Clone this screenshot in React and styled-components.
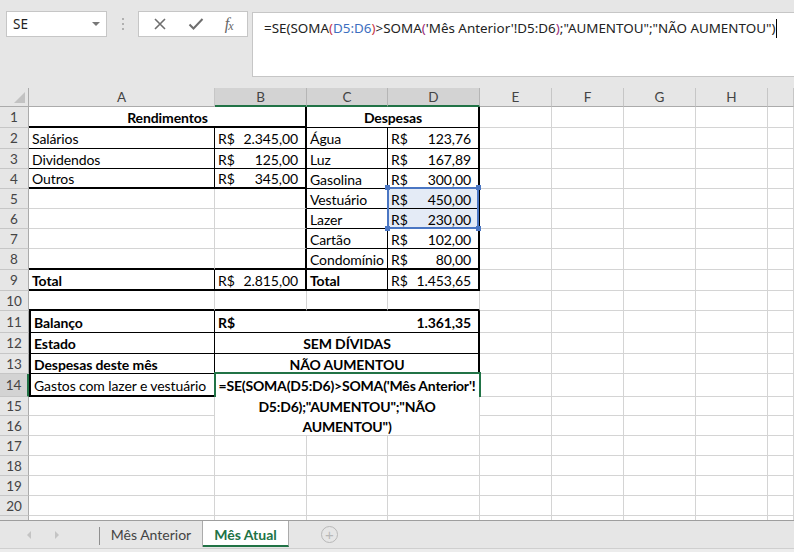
import React from "react";
import styled, { createGlobalStyle } from "styled-components";

const GlobalStyle = createGlobalStyle`
  * { box-sizing: border-box; }
  body {
    margin: 0;
    background: #ffffff;
    overflow: hidden;
    font-family: Lato, "Liberation Sans", sans-serif;
  }
`;

const COLS = [29, 186, 92, 81, 92, 72, 72, 72, 72, 26];
const LETTERS = ["A", "B", "C", "D", "E", "F", "G", "H", ""];
const ROW_H = [21, 21, 20, 20, 20, 20, 20, 21, 21, 20, 22, 21, 20, 23, 19, 20, 20, 20, 20, 20, 20];
const GREEN = "#217346";
const GRID = "#d4d4d4";

const line = (t) =>
  t === "thin" ? "1px solid #000" : t === "thick" ? "2px solid #000" : t === "none" ? "1px solid transparent" : `1px solid ${GRID}`;

const Window = styled.div`
  width: 794px;
  height: 552px;
  display: flex;
  flex-direction: column;
  background: #e6e6e6;
  overflow: hidden;
`;

const FormulaRow = styled.div`
  height: 88px;
  flex: none;
  display: flex;
  align-items: flex-start;
  padding: 11px 0 0 6px;
  background: #e6e6e6;
`;

const NameBox = styled.div`
  width: 101px;
  height: 26px;
  background: #fff;
  border: 1px solid #c6c6c6;
  display: flex;
  align-items: center;
  justify-content: space-between;
  padding: 0 6px 0 6px;
  font-family: "Noto Sans", sans-serif;
  font-size: 13.5px;
  color: #222;
`;

const Caret = styled.span`
  width: 0;
  height: 0;
  border-left: 4px solid transparent;
  border-right: 4px solid transparent;
  border-top: 4px solid #777;
`;

const Grip = styled.div`
  width: 31px;
  height: 26px;
  display: flex;
  flex-direction: column;
  align-items: center;
  justify-content: center;
  gap: 3px;
  span {
    width: 2px;
    height: 2px;
    background: #b0b0b0;
  }
`;

const FxGroup = styled.div`
  width: 110px;
  height: 26px;
  background: #fff;
  border: 1px solid #c6c6c6;
  display: flex;
  align-items: center;
  justify-content: space-around;
  padding: 0 4px;
`;

const Fx = styled.span`
  font-family: "Liberation Serif", serif;
  font-style: italic;
  font-size: 16px;
  color: #666;
  letter-spacing: -1px;
  sub {
    font-size: 12px;
    vertical-align: -1px;
  }
`;

const FormulaInput = styled.div`
  flex: 1;
  height: 65px;
  margin-left: 4px;
  margin-top: 1px;
  background: #fff;
  border: 1px solid #c6c6c6;
  border-right: none;
  padding: 6px 0 0 11px;
  font-family: "Noto Sans", sans-serif;
  font-size: 13.4px;
  color: #222;
  white-space: nowrap;
  display: flex;
  align-items: flex-start;
`;

const Tok = styled.span`
  color: ${(p) => p.$c || "#222"};
`;

const TextCursor = styled.span`
  display: inline-block;
  width: 1px;
  height: 19px;
  background: #000;
  margin-left: 1px;
`;

const Sheet = styled.div`
  height: 432px;
  flex: none;
  overflow: hidden;
  background: #fff;
  display: grid;
  grid-template-columns: ${COLS.map((c) => c + "px").join(" ")};
  grid-template-rows: 19px ${ROW_H.map((h) => h + "px").join(" ")};
`;

const Corner = styled.div`
  background: #e6e6e6;
  border-right: 1px solid #ababab;
  border-bottom: 1px solid #ababab;
  display: flex;
  align-items: flex-end;
  justify-content: flex-end;
  padding: 0 3px 3px 0;
  span {
    width: 0;
    height: 0;
    border-left: 11px solid transparent;
    border-bottom: 11px solid #c2c2c2;
  }
`;

const ColHead = styled.div`
  background: ${(p) => (p.$on ? "#d3d3d3" : "#e6e6e6")};
  border-right: 1px solid ${(p) => (p.$on ? "#b5b5b5" : "#c6c6c6")};
  border-bottom: ${(p) => (p.$on ? `2px solid ${GREEN}` : "1px solid #ababab")};
  display: flex;
  align-items: center;
  justify-content: center;
  font-size: 13.5px;
  color: #444;
  padding-top: ${(p) => (p.$on ? "1px" : "0")};
`;

const RowHead = styled.div`
  background: ${(p) => (p.$on ? "#d3d3d3" : "#e6e6e6")};
  border-right: ${(p) => (p.$on ? `2px solid ${GREEN}` : "1px solid #ababab")};
  border-bottom: 1px solid #c6c6c6;
  display: flex;
  align-items: center;
  justify-content: center;
  font-size: 13.5px;
  color: #444;
`;

const Cell = styled.div`
  position: relative;
  grid-column: span ${(p) => p.$span || 1};
  border-right: ${(p) => line(p.$r)};
  border-bottom: ${(p) => line(p.$b)};
  border-left: ${(p) => (p.$l ? line(p.$l) : "none")};
  background: ${(p) => (p.$sel ? "#e4ebf6" : "#fff")};
  display: flex;
  align-items: center;
  justify-content: ${(p) => (p.$center ? "center" : "flex-start")};
  padding: 1px 2px 0 3px;
  font-size: 14px;
  letter-spacing: -0.1px;
  font-weight: ${(p) => (p.$bold ? 700 : 400)};
  color: #000;
  white-space: nowrap;
  overflow: visible;
`;

const Money = styled(Cell)`
  justify-content: space-between;
  padding-right: 7px;
`;

const RefBox = styled.div`
  position: absolute;
  top: -2px;
  left: -1px;
  width: calc(100% + 2px);
  height: 42px;
  border: 2px solid #4a76c3;
  z-index: 2;
  pointer-events: none;
  i {
    position: absolute;
    width: 5px;
    height: 5px;
    background: #4a76c3;
  }
`;

const Editor = styled.div`
  position: relative;
  grid-column: span 3;
  grid-row: span 3;
  background: #fff;
  border-bottom: 1px solid ${GRID};
  border-right: 1px solid ${GRID};
  display: flex;
  flex-direction: column;
  align-items: center;
  padding-top: 2px;
  font-size: 14px;
  letter-spacing: -0.2px;
  font-weight: 700;
  line-height: 20.5px;
  white-space: nowrap;
  z-index: 1;
`;

const ActiveFrame = styled.div`
  position: absolute;
  top: -2px;
  left: -1px;
  right: -2px;
  height: 25px;
  border: 2px solid ${GREEN};
  border-bottom: none;
  pointer-events: none;
`;

const TabBar = styled.div`
  height: 32px;
  flex: none;
  display: flex;
  align-items: stretch;
  background: #e6e6e6;
  border-top: 1px solid #9e9e9e;
  box-shadow: inset 0 -4px 0 #ececec;
  position: relative;
  &::after {
    content: "";
    position: absolute;
    left: 0;
    right: 0;
    bottom: 3px;
    height: 1px;
    background: #cfcfcf;
  }
`;

const NavArrows = styled.div`
  width: 99px;
  display: flex;
  align-items: center;
  padding: 0 0 4px 27px;
  gap: 24px;
`;

const Arrow = styled.span`
  width: 0;
  height: 0;
  border-top: 4px solid transparent;
  border-bottom: 4px solid transparent;
  ${(p) => (p.$dir === "left" ? "border-right: 4px solid #c4c4c4;" : "border-left: 4px solid #c4c4c4;")}
`;

const Divider = styled.div`
  width: 1px;
  height: 18px;
  margin-top: 6px;
  background: #8f8f8f;
`;

const Tab = styled.div`
  display: flex;
  align-items: center;
  justify-content: center;
  width: ${(p) => p.$w}px;
  height: 26px;
  background: ${(p) => (p.$active ? "#fff" : "transparent")};
  border-right: 1px solid #ababab;
  border-bottom: ${(p) => (p.$active ? `2px solid ${GREEN}` : "none")};
  font-size: 14px;
  font-weight: ${(p) => (p.$active ? 700 : 400)};
  color: ${(p) => (p.$active ? GREEN : "#444")};
  padding-top: ${(p) => (p.$active ? "2px" : "0")};
`;

const AddSheet = styled.div`
  margin: 5px 0 0 32px;
  width: 17px;
  height: 17px;
  border-radius: 50%;
  border: 1px solid #b8b8b8;
  color: #b8b8b8;
  display: flex;
  align-items: center;
  justify-content: center;
  font-size: 15px;
  line-height: 1;
  font-family: "Liberation Sans", sans-serif;
`;

const CloseIcon = () => (
  <svg width="14" height="14" viewBox="0 0 14 14">
    <path d="M2 2 L12 12 M12 2 L2 12" stroke="#6e6e6e" strokeWidth="1.6" />
  </svg>
);

const CheckIcon = () => (
  <svg width="16" height="14" viewBox="0 0 16 14">
    <path d="M1.5 7.5 L5.5 11.5 L14.5 2" stroke="#6e6e6e" strokeWidth="2" fill="none" />
  </svg>
);

const money = (v, extra = {}) => ({ kind: "money", v, ...extra });
const txt = (v, extra = {}) => ({ kind: "text", v, ...extra });

// columns A..D per row; E..I are plain grid cells
const ROWS = [
  [txt("Rendimentos", { $span: 2, $bold: true, $center: true, $b: "thick", $r: "thick" }), txt("Despesas", { $span: 2, $bold: true, $center: true, $b: "thin", $r: "thick" })],
  [txt("Salários", { $r: "thin", $b: "thin" }), money("2.345,00", { $r: "thick", $b: "thin" }), txt("Água", { $r: "thin", $b: "thin" }), money("123,76", { $r: "thick", $b: "thin" })],
  [txt("Dividendos", { $r: "thin", $b: "thin" }), money("125,00", { $r: "thick", $b: "thin" }), txt("Luz", { $r: "thin", $b: "thin" }), money("167,89", { $r: "thick", $b: "thin" })],
  [txt("Outros", { $r: "thin", $b: "thick" }), money("345,00", { $r: "thick", $b: "thick" }), txt("Gasolina", { $r: "thin", $b: "thin" }), money("300,00", { $r: "thick", $b: "thin" })],
  [txt(""), txt("", { $r: "thick" }), txt("Vestuário", { $r: "thin", $b: "thin" }), money("450,00", { $r: "thick", $b: "thin", $sel: true, ref: true })],
  [txt(""), txt("", { $r: "thick" }), txt("Lazer", { $r: "thin", $b: "thin" }), money("230,00", { $r: "thick", $b: "thin", $sel: true })],
  [txt(""), txt("", { $r: "thick" }), txt("Cartão", { $r: "thin", $b: "thin" }), money("102,00", { $r: "thick", $b: "thin" })],
  [txt("", { $b: "thick" }), txt("", { $r: "thick", $b: "thick" }), txt("Condomínio", { $r: "thin", $b: "thick" }), money("80,00", { $r: "thick", $b: "thick" })],
  [txt("Total", { $bold: true, $r: "thin", $b: "thick" }), money("2.815,00", { $r: "thick", $b: "thick" }), txt("Total", { $bold: true, $r: "thin", $b: "thick" }), money("1.453,65", { $r: "thick", $b: "thick" })],
  [txt("", { $b: "thick" }), txt("", { $b: "thick" }), txt("", { $b: "thick" }), txt("", { $b: "thick" })],
  [txt("Balanço", { $bold: true, $l: "thick", $r: "thin", $b: "thin" }), money("1.361,35", { $span: 3, $bold: true, $r: "thick", $b: "thin" })],
  [txt("Estado", { $bold: true, $l: "thick", $r: "thin", $b: "thin" }), txt("SEM DÍVIDAS", { $span: 3, $bold: true, $center: true, $r: "thick", $b: "thin" })],
  [txt("Despesas deste mês", { $bold: true, $l: "thick", $r: "thin", $b: "thin" }), txt("NÃO AUMENTOU", { $span: 3, $bold: true, $center: true, $r: "thick", $b: "thin" })],
  [txt("Gastos com lazer e vestuário", { $l: "thick", $r: "none", $b: "thick" }), { kind: "editor" }],
  [txt("")],
  [txt("")],
];

const renderCell = (c, key) => {
  if (c.kind === "editor") {
    return (
      <Editor key={key}>
        <ActiveFrame />
        <span>=SE(SOMA(D5:D6)&gt;SOMA('Mês Anterior'!</span>
        <span>D5:D6);"AUMENTOU";"NÃO</span>
        <span>AUMENTOU")</span>
      </Editor>
    );
  }
  const { kind, v, ref, ...props } = c;
  if (kind === "money") {
    return (
      <Money key={key} {...props}>
        <span>R$</span>
        <span>{v}</span>
        {ref && (
          <RefBox>
            <i style={{ left: -4, top: -4 }} />
            <i style={{ right: -4, top: -4 }} />
            <i style={{ left: -4, bottom: -4 }} />
            <i style={{ right: -4, bottom: -4 }} />
          </RefBox>
        )}
      </Money>
    );
  }
  return (
    <Cell key={key} {...props}>
      {v}
    </Cell>
  );
};

const FORMULA = [
  ["=SE(SOMA"],
  ["(", "#c8374a"],
  ["D5:D6", "#3d6fc0"],
  [")", "#c8374a"],
  [">SOMA"],
  ["(", "#9c2f7a"],
  ["'Mês Anterior'!D5:D6"],
  [")", "#9c2f7a"],
  [';"AUMENTOU";"NÃO AUMENTOU")'],
];

export default function App() {
  return (
    <>
      <GlobalStyle />
      <Window>
        <FormulaRow>
          <NameBox>
            <span>SE</span>
            <Caret />
          </NameBox>
          <Grip>
            <span />
            <span />
            <span />
          </Grip>
          <FxGroup>
            <CloseIcon />
            <CheckIcon />
            <Fx>
              f<sub>x</sub>
            </Fx>
          </FxGroup>
          <FormulaInput>
            {FORMULA.map(([t, c], i) => (
              <Tok key={i} $c={c}>
                {t}
              </Tok>
            ))}
            <TextCursor />
          </FormulaInput>
        </FormulaRow>

        <Sheet>
          <Corner>
            <span />
          </Corner>
          {LETTERS.map((l, i) => (
            <ColHead key={i} $on={i >= 1 && i <= 3}>
              {l}
            </ColHead>
          ))}
          {ROW_H.map((_, r) => {
            const defs = ROWS[r] || [];
            const cells = [];
            let used = 0;
            defs.forEach((c, i) => {
              cells.push(renderCell(c, `c${i}`));
              used += c.kind === "editor" ? 3 : c.$span || 1;
            });
            if (r === 14 || r === 15) used += 3;
            for (let k = used; k < 9; k++) cells.push(<Cell key={`g${k}`} />);
            return (
              <React.Fragment key={r}>
                <RowHead $on={r === 13}>{r < 20 ? r + 1 : ""}</RowHead>
                {cells}
              </React.Fragment>
            );
          })}
        </Sheet>

        <TabBar>
          <NavArrows>
            <Arrow $dir="left" />
            <Arrow $dir="right" />
          </NavArrows>
          <Divider />
          <Tab $w={103}>Mês Anterior</Tab>
          <Tab $w={86} $active>
            Mês Atual
          </Tab>
          <AddSheet>+</AddSheet>
        </TabBar>
      </Window>
    </>
  );
}
